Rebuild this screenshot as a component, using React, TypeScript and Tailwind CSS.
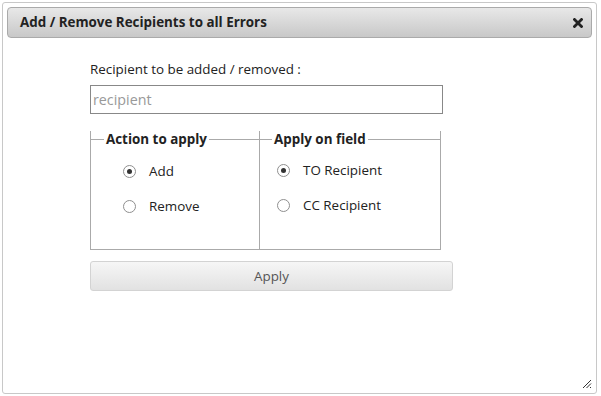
import React from "react";

function Radio({ checked }: { checked?: boolean }) {
  return (
    <span className="w-[13px] h-[13px] rounded-full border border-[#8f8f8f] bg-white flex items-center justify-center shrink-0">
      {checked && <span className="w-[5px] h-[5px] rounded-full bg-[#333]" />}
    </span>
  );
}

export default function App() {
  const font = { fontFamily: '"Open Sans", "Noto Sans", sans-serif' };
  return (
    <div className="w-[601px] h-[396px] bg-white pt-[2px] pl-[2px]" style={font}>
      <div className="w-[595px] h-[392px] border border-[#c8c8c8] rounded-[3px] p-[4px] flex flex-col relative">
        <div className="h-[31px] border border-[#aaaaaa] rounded-[4px] bg-gradient-to-b from-[#e8e8e8] to-[#c8c8c8] flex items-center justify-between pl-[12px] pr-[8px]">
          <span className="text-[13.4px] font-bold text-[#222]">Add / Remove Recipients to all Errors</span>
          <svg width="10" height="10" viewBox="0 0 10 10">
            <path d="M1.5 1.5 L8.5 8.5 M8.5 1.5 L1.5 8.5" stroke="#222" strokeWidth="2.8" strokeLinecap="square" />
          </svg>
        </div>
        <div className="pl-[83px] pt-[22px]">
          <div className="text-[13.4px] text-[#222] leading-[18px]">Recipient to be added / removed :</div>
          <div className="mt-[7px] w-[353px] h-[29px] border border-[#888] flex items-center pl-[2px]">
            <span className="text-[14.3px] text-[#999]">recipient</span>
          </div>
          <div className="flex mt-[17px] h-[119px]">
            <div className="w-[170px] border border-[#aaa] border-t-0 relative pt-[32px]">
              <div className="absolute top-0 left-0 right-0 flex items-center">
                <span className="w-[13px] h-px bg-[#aaa]" />
                <span className="text-[13.4px] font-bold text-[#222] px-[2px] leading-[16px]">Action to apply</span>
                <span className="flex-1 h-px bg-[#aaa]" />
              </div>
              <div className="flex flex-col gap-[18px] pl-[32px]">
                <div className="flex items-center gap-[13px] h-[17px]">
                  <Radio checked />
                  <span className="text-[13.4px] text-[#222]">Add</span>
                </div>
                <div className="flex items-center gap-[13px] h-[17px]">
                  <Radio />
                  <span className="text-[13.4px] text-[#222]">Remove</span>
                </div>
              </div>
            </div>
            <div className="w-[181px] border border-[#aaa] border-t-0 border-l-0 relative pt-[31px]">
              <div className="absolute top-0 left-0 right-0 flex items-center">
                <span className="w-[12px] h-px bg-[#aaa]" />
                <span className="text-[13.4px] font-bold text-[#222] px-[2px] leading-[16px]">Apply on field</span>
                <span className="flex-1 h-px bg-[#aaa]" />
              </div>
              <div className="flex flex-col gap-[18px] pl-[17px]">
                <div className="flex items-center gap-[13px] h-[17px]">
                  <Radio checked />
                  <span className="text-[13.4px] text-[#222]">TO Recipient</span>
                </div>
                <div className="flex items-center gap-[13px] h-[17px]">
                  <Radio />
                  <span className="text-[13.4px] text-[#222]">CC Recipient</span>
                </div>
              </div>
            </div>
          </div>
          <div className="mt-[11px] w-[363px] h-[30px] border border-[#d3d3d3] rounded-[3px] bg-gradient-to-b from-[#f6f6f6] to-[#e2e2e2] flex items-center justify-center">
            <span className="text-[13.4px] text-[#555]">Apply</span>
          </div>
        </div>
        <svg className="absolute right-[4px] bottom-[4px]" width="10" height="10" viewBox="0 0 10 10">
          <path d="M9 1 L1 9 M9 4.5 L4.5 9 M9 8 L8 9" stroke="#333" strokeWidth="1" />
        </svg>
      </div>
    </div>
  );
}
